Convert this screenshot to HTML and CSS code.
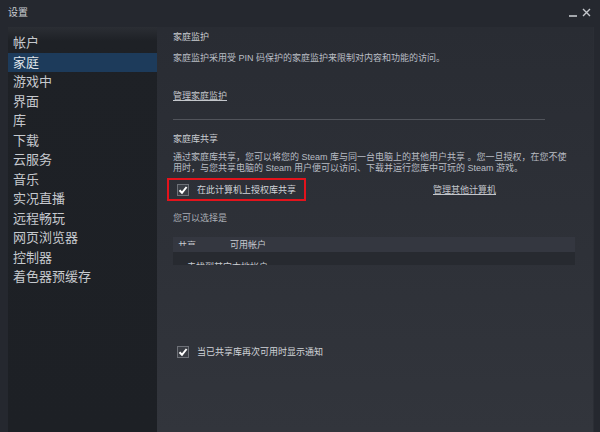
FILE: index.html
```html
<!DOCTYPE html>
<html lang="zh-CN">
<head>
    <meta charset="UTF-8">
    <title>设置</title>
    <link rel="stylesheet" href="styles.css">
</head>
<body>

<div class="window">
    <!-- Title bar -->
    <div class="titlebar">
        <span class="title">设置</span>
        <div class="controls">
            <svg width="9" height="9" viewBox="0 0 9 9"><line x1="0" y1="8" x2="8" y2="8" stroke="#c4c7cc" stroke-width="1.6"/></svg>
            <svg width="9" height="9" viewBox="0 0 9 9"><path d="M1 1 L8 8 M8 1 L1 8" stroke="#c4c7cc" stroke-width="1.4" fill="none"/></svg>
        </div>
    </div>

    <div class="main">
        <!-- Sidebar menu -->
        <div class="sidebar">
            <div class="nav-item">帐户</div>
            <div class="nav-item active">家庭</div>
            <div class="nav-item">游戏中</div>
            <div class="nav-item">界面</div>
            <div class="nav-item">库</div>
            <div class="nav-item">下载</div>
            <div class="nav-item">云服务</div>
            <div class="nav-item">音乐</div>
            <div class="nav-item">实况直播</div>
            <div class="nav-item">远程畅玩</div>
            <div class="nav-item">网页浏览器</div>
            <div class="nav-item">控制器</div>
            <div class="nav-item">着色器预缓存</div>
        </div>

        <!-- Family settings -->
        <div class="content">
            <div class="section-title">家庭监护</div>
            <p class="desc first-desc">家庭监护采用受 PIN 码保护的家庭监护来限制对内容和功能的访问。</p>
            <a class="link manage-link">管理家庭监护</a>
            <div class="divider"></div>

            <div class="section-title share-title">家庭库共享</div>
            <p class="desc share-desc">通过家庭库共享，您可以将您的 Steam 库与同一台电脑上的其他用户共享 。您一旦授权，在您不使<br>用时，与您共享电脑的 Steam 用户便可以访问、下载并运行您库中可玩的 Steam 游戏。</p>

            <div class="auth-row">
                <div class="highlight">
                    <span class="checkbox">
                        <svg width="10" height="10" viewBox="0 0 10 10"><polyline points="1.5,5.2 4,7.8 8.6,2" stroke="#fff" stroke-width="2" fill="none"/></svg>
                    </span>
                    <span class="check-label">在此计算机上授权库共享</span>
                </div>
                <a class="link other-link">管理其他计算机</a>
            </div>

            <div class="desc choose">您可以选择是</div>

            <div class="accounts">
                <div class="accounts-head">
                    <span class="col-share"><span>共享</span></span>
                    <span class="col-name">可用帐户</span>
                </div>
                <div class="accounts-row">
                    <span>未找到其它本地帐户</span>
                </div>
            </div>

            <div class="notify-row">
                <span class="checkbox">
                    <svg width="10" height="10" viewBox="0 0 10 10"><polyline points="1.5,5.2 4,7.8 8.6,2" stroke="#fff" stroke-width="2" fill="none"/></svg>
                </span>
                <span class="check-label">当已共享库再次可用时显示通知</span>
            </div>
        </div>
    </div>
</div>

</body>
</html>
```

FILE: styles.css
```css
/* Base */
body {
    margin: 0;
    padding: 0;
    font-family: "Liberation Sans", "Noto Sans CJK SC", sans-serif;
    background-color: #25282f;
}

.window {
    width: 600px;
    height: 432px;
    display: flex;
    flex-direction: column;
    background-color: #25282f;
    overflow: hidden;
}

/* Title bar */
.titlebar {
    height: 27px;
    display: flex;
    align-items: flex-start;
    justify-content: space-between;
    box-sizing: border-box;
    padding: 6px 9px 0 8px;
}

.title {
    font-size: 10px;
    line-height: 14px;
    color: #c9ccd1;
}

.controls {
    display: flex;
    gap: 4px;
    padding-top: 2px;
}

/* Main area */
.main {
    flex: 1;
    display: flex;
    padding-left: 8px;
}

.sidebar {
    width: 149px;
    padding-top: 6px;
    background: linear-gradient(to bottom, #2b2e34 0px, #1e2126 14px, #1d2025 100%);
}

.nav-item {
    height: 19.5px;
    line-height: 19px;
    padding-left: 5px;
    font-size: 13px;
    color: #c6c9ce;
}

.nav-item.active {
    background-color: #1d3b5b;
    color: #dfe3e8;
}

/* Content panel */
.content {
    flex: 1;
    padding: 4px 0 0 16px;
    margin-right: 6px;
    background: linear-gradient(to bottom, #292c33, #32353c);
    border-right: 1px solid #2b2e35;
    font-size: 9px;
    line-height: 12px;
    color: #b9bdc4;
}

.section-title {
    color: #c8cbd0;
}

.desc {
    margin: 0;
}

.first-desc {
    margin-top: 9px;
}

.link {
    display: inline-block;
    color: #c3c6cb;
    text-decoration: underline;
}

.manage-link {
    margin-top: 26px;
}

.divider {
    width: 372px;
    height: 1px;
    margin-top: 17px;
    background-color: #51545b;
}

.share-title {
    margin-top: 13px;
}

.share-desc {
    margin-top: 7px;
    line-height: 11px;
}

/* Share checkbox row */
.auth-row {
    display: flex;
    align-items: center;
    margin-top: 4px;
    margin-left: -6px;
}

.highlight {
    width: 127px;
    height: 19px;
    border: 2px solid #e3131c;
    display: flex;
    align-items: center;
    padding-left: 8px;
}

.checkbox {
    width: 10px;
    height: 10px;
    border: 1px solid #6e7178;
    background-color: #3a3d44;
    display: flex;
    align-items: center;
    justify-content: center;
}

.check-label {
    margin-left: 8px;
    white-space: nowrap;
    color: #d0d3d8;
}

.other-link {
    margin-left: 127px;
}

.choose {
    margin-top: 11px;
    color: #a9adb4;
}

/* Accounts table */
.accounts {
    width: 402px;
    margin-top: 13px;
}

.accounts-head {
    height: 15px;
    display: flex;
    background-color: #343740;
    color: #c8cbd0;
}

.col-share {
    width: 52px;
    height: 6px;
    overflow: hidden;
    padding-left: 5px;
    padding-top: 3px;
}

.col-share span {
    display: block;
    line-height: 12px;
}

.col-name {
    line-height: 16px;
}

.accounts-row {
    height: 13px;
    background-color: #272a30;
    overflow: hidden;
    padding-left: 14px;
    box-sizing: border-box;
}

.accounts-row span {
    display: block;
    line-height: 12px;
    padding-top: 9px;
    color: #c8cbd0;
}

/* Notification checkbox */
.notify-row {
    display: flex;
    align-items: center;
    margin-top: 81px;
    padding-left: 4px;
}
```
